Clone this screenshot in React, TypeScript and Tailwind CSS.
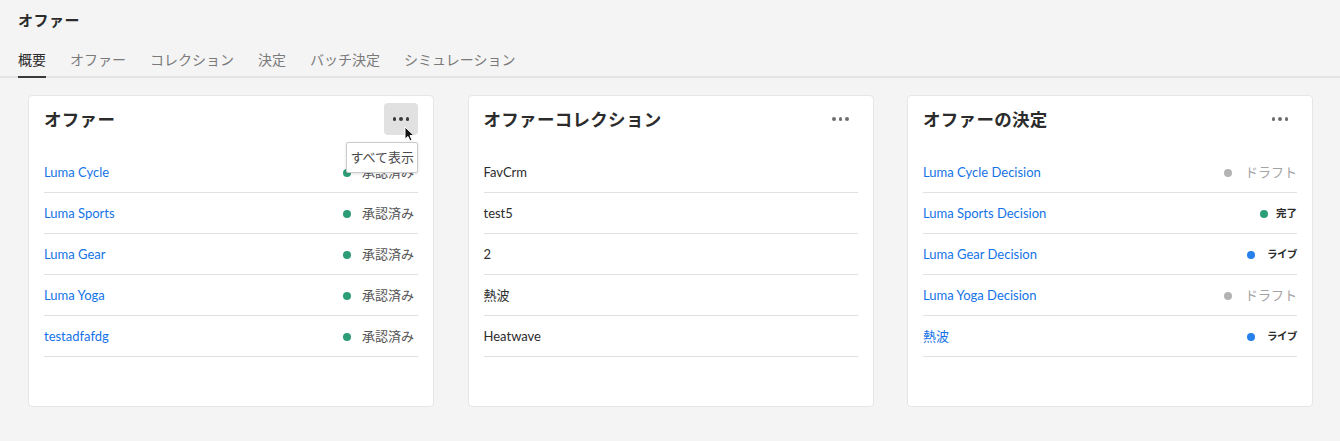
import React from "react";

const font = { fontFamily: '"Noto Sans", "Noto Sans CJK JP", sans-serif' };
const rowFont = { fontFamily: 'Lato, "Noto Sans CJK JP", sans-serif' };

type Status = { dot: string; text: string; cls: string; gap: string };
type Row = { label: string; link?: boolean; status?: Status };

const approved: Status = { dot: "bg-[#2d9d78]", text: "承認済み", cls: "text-[13px] text-[#555555]", gap: "gap-[11px]" };
const draft: Status = { dot: "bg-[#b3b3b3]", text: "ドラフト", cls: "text-[13px] text-[#a3a3a3]", gap: "gap-[13px]" };
const done: Status = { dot: "bg-[#2d9d78]", text: "完了", cls: "text-[10.5px] font-bold text-[#2c2c2c]", gap: "gap-[8px]" };
const live: Status = {
  dot: "bg-[#2680eb]",
  text: "ライブ",
  cls: "text-[10.5px] font-bold text-[#2c2c2c] tracking-[-0.5px]",
  gap: "gap-[12px]",
};

const cards: { title: string; hover?: boolean; pr: string; rows: Row[] }[] = [
  {
    title: "オファー",
    hover: true,
    pr: "pr-[4px]",
    rows: [
      { label: "Luma Cycle", link: true, status: approved },
      { label: "Luma Sports", link: true, status: approved },
      { label: "Luma Gear", link: true, status: approved },
      { label: "Luma Yoga", link: true, status: approved },
      { label: "testadfafdg", link: true, status: approved },
    ],
  },
  {
    title: "オファーコレクション",
    pr: "pr-0",
    rows: [{ label: "FavCrm" }, { label: "test5" }, { label: "2" }, { label: "熱波" }, { label: "Heatwave" }],
  },
  {
    title: "オファーの決定",
    pr: "pr-0",
    rows: [
      { label: "Luma Cycle Decision", link: true, status: draft },
      { label: "Luma Sports Decision", link: true, status: done },
      { label: "Luma Gear Decision", link: true, status: live },
      { label: "Luma Yoga Decision", link: true, status: draft },
      { label: "熱波", link: true, status: live },
    ],
  },
];

const tabs = ["概要", "オファー", "コレクション", "決定", "バッチ決定", "シミュレーション"];

function Dots({ dark }: { dark?: boolean }) {
  const c = dark ? "bg-[#3a3a3a]" : "bg-[#6e6e6e]";
  return (
    <div className="flex items-center gap-[3px]">
      <span className={`w-[3.5px] h-[3.5px] rounded-full ${c}`} />
      <span className={`w-[3.5px] h-[3.5px] rounded-full ${c}`} />
      <span className={`w-[3.5px] h-[3.5px] rounded-full ${c}`} />
    </div>
  );
}

export default function App() {
  return (
    <div className="w-[1340px] h-[441px] bg-[#f4f4f4] overflow-hidden" style={font}>
      <div className="pl-[18px] pt-[9px] h-[32px] flex items-center">
        <h1 className="text-[15px] font-bold text-[#2c2c2c] tracking-[0.5px]">オファー</h1>
      </div>
      <div className="border-b-2 border-[#e3e3e3] mt-[8px]">
        <div className="flex gap-[24px] pl-[18px] h-[36px] pt-[2px]">
          {tabs.map((t, i) => (
            <div
              key={t}
              className={`flex items-center text-[14px] relative ${i === 0 ? "text-[#2c2c2c]" : "text-[#7a7a7a]"}`}
            >
              {t}
              {i === 0 && <span className="absolute left-0 right-0 -bottom-[2px] h-[2px] bg-[#3a3a3a]" />}
            </div>
          ))}
        </div>
      </div>
      <div className="grid grid-cols-3 gap-[33.5px] pl-[28px] pr-[27px] mt-[17px]">
        {cards.map((c) => (
          <div key={c.title} className="bg-white border border-[#e6e6e6] rounded-[4px] h-[312px] px-[15px]">
            <div className="flex items-center justify-between pt-[7px] h-[39px]">
              <h2 className="text-[17.5px] font-bold text-[#2c2c2c] tracking-[0.3px] pt-[1px]">{c.title}</h2>
              <div className="relative">
                <div
                  className={`w-[34px] h-[32px] rounded-[4px] flex items-center justify-center ${
                    c.hover ? "bg-[#e1e1e1]" : ""
                  }`}
                >
                  <Dots dark={c.hover} />
                </div>
                {c.hover && (
                  <>
                    <svg className="absolute left-[20px] top-[23px] z-20" width="11" height="17" viewBox="0 0 11 17">
                      <path d="M1 1 L1 13 L4 10.5 L6 15 L8 14 L6 9.6 L10 9.6 Z" fill="#111" stroke="#fff" strokeWidth="1" />
                    </svg>
                    <div className="absolute right-0 top-[39px] z-10 bg-white border border-[#cacaca] rounded-[2px] shadow-[0_1px_3px_rgba(0,0,0,0.12)] px-[3px] h-[31px] flex items-center whitespace-nowrap text-[13px] text-[#4b4b4b]">
                      すべて表示
                    </div>
                  </>
                )}
              </div>
            </div>
            <div className="mt-[17px]">
              {c.rows.map((r) => (
                <div
                  key={r.label}
                  className="h-[41px] pt-[2px] border-b border-[#e1e1e1] flex items-center justify-between"
                >
                  <span
                    className={`text-[13px] ${r.link ? "text-[#1473e6]" : "text-[#2c2c2c]"}`}
                    style={rowFont}
                  >
                    {r.label}
                  </span>
                  {r.status && (
                    <span className={`flex items-center ${r.status.gap} ${c.pr}`}>
                      <span className={`w-[8px] h-[8px] rounded-full ${r.status.dot}`} />
                      <span className={r.status.cls}>{r.status.text}</span>
                    </span>
                  )}
                </div>
              ))}
            </div>
          </div>
        ))}
      </div>
    </div>
  );
}
